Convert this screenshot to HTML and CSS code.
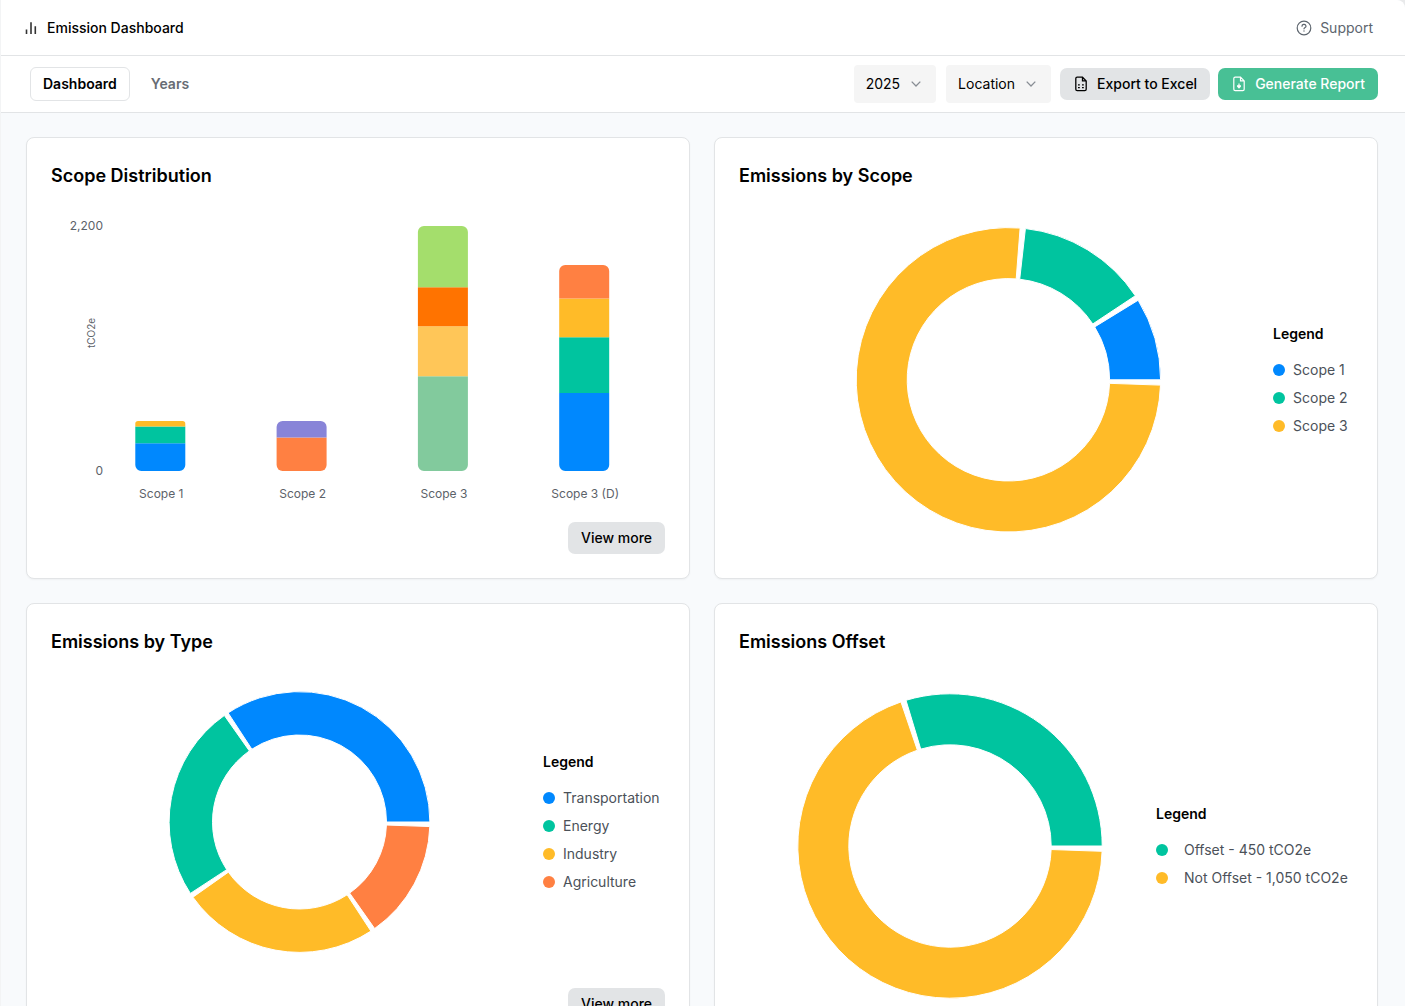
FILE: index.html
```
<!DOCTYPE html>
<html lang="en">

<head>
    <meta charset="UTF-8">
    <meta name="viewport" content="width=device-width, initial-scale=1.0">
    <title>Emission Dashboard</title>
    <link rel="stylesheet" href="styles.css">
</head>

<body>
    <header class="topbar">
        <div class="brand">
            <svg width="12" height="14" viewBox="0 0 12 14" fill="none" stroke="#333" stroke-width="1.6">
                <path d="M1.5 8.5v4.5M6 1.2v11.8M10.3 5.2v7.8" />
            </svg>
            <span>Emission Dashboard</span>
        </div>
        <a class="support">
            <svg width="16" height="16" viewBox="0 0 16 16" fill="none" stroke="currentColor" stroke-width="1.2" stroke-linecap="round">
                <circle cx="8" cy="8" r="6.8" />
                <path d="M6 6.2a2 1.7 0 1 1 3.1 1.3c-.7.45-1.1.7-1.1 1.3" />
                <path d="M8 11v.1" stroke-width="1.3" />
            </svg>
            <span>Support</span>
        </a>
    </header>

    <nav class="toolbar">
        <div class="tabs">
            <button class="tab active">Dashboard</button>
            <button class="tab">Years</button>
        </div>
        <div class="actions">
            <button class="select">2025
                <svg width="10" height="6" viewBox="0 0 10 6" fill="none" stroke="#888d94" stroke-width="1.3"><path d="M.7.6 5 5 9.3.6" /></svg>
            </button>
            <button class="select">Location
                <svg width="10" height="6" viewBox="0 0 10 6" fill="none" stroke="#888d94" stroke-width="1.3"><path d="M.7.6 5 5 9.3.6" /></svg>
            </button>
            <button class="btn export">
                <svg width="12" height="16" viewBox="0 0 12 16" fill="none" stroke="currentColor" stroke-width="1.3">
                    <path d="M7.5 1.2H2.2A1.4 1.4 0 0 0 .8 2.6v10.6a1.4 1.4 0 0 0 1.4 1.4h7.6a1.4 1.4 0 0 0 1.4-1.4V4.9zM7.5 1.2v3.7h3.7" />
                    <path d="M3 8.8h1.8M7 8.8h1.8M3 11.6h1.8M7 11.6h1.8" stroke-width="1.2" />
                </svg>
                Export to Excel
            </button>
            <button class="btn report">
                <svg width="12" height="16" viewBox="0 0 12 16" fill="none" stroke="currentColor" stroke-width="1.2">
                    <path d="M7.5 1.2H2.2A1.4 1.4 0 0 0 .8 2.6v10.6a1.4 1.4 0 0 0 1.4 1.4h7.6a1.4 1.4 0 0 0 1.4-1.4V4.9zM7.5 1.2v3.7h3.7" />
                    <path d="M6 7.4v4.4M4 9.9h4M4.4 10.2 6 11.8l1.6-1.6" />
                </svg>
                Generate Report
            </button>
        </div>
    </nav>

    <main class="grid">
        <section class="card">
            <h2>Scope Distribution</h2>
            <svg id="scope-bars" class="bars" width="614" height="332"></svg>
            <button class="btn more">View more</button>
        </section>

        <section class="card">
            <h2>Emissions by Scope</h2>
            <div class="chart-row">
                <svg id="by-scope" class="donut" height="380"></svg>
                <div class="legend scope-legend">
                    <h3>Legend</h3>
                    <ul>
                        <li><i class="dot blue"></i>Scope 1</li>
                        <li><i class="dot green"></i>Scope 2</li>
                        <li><i class="dot yellow"></i>Scope 3</li>
                    </ul>
                </div>
            </div>
        </section>

        <section class="card">
            <h2>Emissions by Type</h2>
            <div class="chart-row type-row">
                <svg id="by-type" class="donut" height="332"></svg>
                <div class="legend type-legend">
                    <h3>Legend</h3>
                    <ul>
                        <li><i class="dot blue"></i>Transportation</li>
                        <li><i class="dot green"></i>Energy</li>
                        <li><i class="dot yellow"></i>Industry</li>
                        <li><i class="dot orange"></i>Agriculture</li>
                    </ul>
                </div>
            </div>
            <button class="btn more">View more</button>
        </section>

        <section class="card">
            <h2>Emissions Offset</h2>
            <div class="chart-row">
                <svg id="offset" class="donut" height="380"></svg>
                <div class="legend offset-legend">
                    <h3>Legend</h3>
                    <ul>
                        <li><i class="dot green"></i>Offset - 450 tCO2e</li>
                        <li><i class="dot yellow"></i>Not Offset - 1,050 tCO2e</li>
                    </ul>
                </div>
            </div>
        </section>
    </main>

    <script src="charts.js"></script>
</body>

</html>
```
FILE: styles.css
```
* {
    box-sizing: border-box;
}

html {
    background-color: #e9eaeb;
}

body {
    margin: 0;
    height: 1006px;
    overflow: hidden;
    font-family: Inter, "Liberation Sans", sans-serif;
    font-size: 14px;
    line-height: 20px;
    color: #000;
    background-color: #f8fafc;
    border-left: 1px solid #f3f4f5;
}

button {
    font: inherit;
    color: inherit;
    border: none;
    background: none;
    cursor: pointer;
}

.topbar {
    display: flex;
    justify-content: space-between;
    align-items: center;
    height: 56px;
    padding: 0 32px 0 24px;
    background-color: #fff;
    border-bottom: 1px solid #e2e4e6;
}

.brand {
    display: flex;
    align-items: center;
    gap: 10px;
    font-weight: 500;
}

.support {
    display: flex;
    align-items: center;
    gap: 8px;
    color: #5d656e;
}

.toolbar {
    display: flex;
    justify-content: space-between;
    align-items: center;
    height: 57px;
    padding: 0 27px 0 29px;
    background-color: #fff;
    border-bottom: 1px solid #e2e4e6;
}

.tabs {
    display: flex;
    gap: 8px;
}

.tab {
    height: 34px;
    padding: 0 12px;
    border: 1px solid transparent;
    border-radius: 6px;
    font-weight: 600;
    color: #676c74;
}

.tab.active {
    color: #000;
    border-color: #e2e4e6;
}

.actions {
    display: flex;
    align-items: center;
}

.select {
    display: flex;
    align-items: center;
    gap: 11px;
    height: 38px;
    padding: 0 15px 0 12px;
    margin-right: 10px;
    border-radius: 4px;
    background-color: #f5f5f5;
}

.select + .btn {
    margin-left: -1px;
}

.btn {
    display: flex;
    align-items: center;
    height: 32px;
    padding: 0 13px;
    border-radius: 7px;
    font-weight: 500;
    background-color: #e2e4e6;
}

.btn svg {
    margin: 0 10px 0 2px;
}

.report {
    margin-left: 8px;
    color: #fff;
    background-color: #48c095;
}

.grid {
    display: grid;
    grid-template-columns: 664px 664px;
    grid-auto-rows: 442px;
    gap: 24px;
    padding: 24px 0 0 25px;
}

.card {
    padding: 24px;
    background-color: #fff;
    border: 1px solid #e2e4e6;
    border-radius: 8px;
    box-shadow: 0 1px 2px rgba(0, 0, 0, 0.04);
}

.card h2 {
    margin: 0;
    font-size: 18px;
    line-height: 28px;
    font-weight: 600;
}

.bars,
.donut {
    display: block;
}

.donut {
    flex: 1;
    min-width: 0;
}

.bars text {
    font-size: 12px;
    fill: #5c6269;
}

.bars .unit {
    font-size: 10px;
}

.more {
    margin-left: auto;
}

.chart-row {
    display: flex;
    align-items: center;
    height: 380px;
}

.type-row {
    height: 332px;
}

.legend h3 {
    margin: 0 0 16px;
    font-size: 14px;
    line-height: 20px;
    font-weight: 600;
}

.legend ul {
    display: flex;
    flex-direction: column;
    gap: 8px;
    margin: 0;
    padding: 0;
    list-style: none;
}

.legend li {
    display: flex;
    align-items: center;
    gap: 8px;
    color: #4b5159;
    white-space: nowrap;
}

.scope-legend {
    width: 80px;
}

.type-legend {
    width: 122px;
}

.offset-legend {
    width: 197px;
}

.offset-legend li {
    gap: 16px;
}

.dot {
    flex: none;
    width: 12px;
    height: 12px;
    border-radius: 50%;
}

.blue {
    background-color: #0088fe;
}

.green {
    background-color: #00c49f;
}

.yellow {
    background-color: #ffbb28;
}

.orange {
    background-color: #ff8042;
}

body,
.topbar {
    border-top-right-radius: 8px;
}
```
FILE: charts.js
```
const SVG_NS = 'http://www.w3.org/2000/svg';

function add(svg, tag, attrs, text) {
    const el = document.createElementNS(SVG_NS, tag);
    for (const key in attrs) el.setAttribute(key, attrs[key]);
    if (text) el.textContent = text;
    svg.appendChild(el);
}

// angles go counter-clockwise, starting at 3 o'clock
function drawDonut(id, cx, cy, outer, inner, slices) {
    const svg = document.getElementById(id);
    const padding = 2;
    const total = slices.reduce((sum, s) => sum + s[0], 0);
    const sweep = 360 - padding * slices.length;
    const point = (r, deg) => {
        const rad = deg * Math.PI / 180;
        return (cx + r * Math.cos(rad)) + ' ' + (cy - r * Math.sin(rad));
    };

    let start = 0;
    slices.forEach(([value, color]) => {
        const angle = value / total * sweep;
        const end = start + angle;
        const large = angle > 180 ? 1 : 0;
        const d = `M${point(outer, start)} A${outer} ${outer} 0 ${large} 0 ${point(outer, end)}` +
            ` L${point(inner, end)} A${inner} ${inner} 0 ${large} 1 ${point(inner, start)}Z`;
        add(svg, 'path', { d, fill: color, stroke: '#fff' });
        start = end + padding;
    });
}

function drawBars() {
    const svg = document.getElementById('scope-bars');
    const top = 36, height = 245, width = 50, max = 2200;
    const bars = [
        ['Scope 1', [[250, '#0088fe'], [150, '#00c49f'], [50, '#ffbb28']]],
        ['Scope 2', [[300, '#ff8042'], [150, '#8884d8']]],
        ['Scope 3', [[850, '#82ca9d'], [450, '#ffc658'], [350, '#ff7300'], [550, '#a4de6c']]],
        ['Scope 3 (D)', [[700, '#0088fe'], [500, '#00c49f'], [350, '#ffbb28'], [300, '#ff8042']]]
    ];

    add(svg, 'text', { x: 52, y: top + 4, 'text-anchor': 'end' }, '2,200');
    add(svg, 'text', { x: 52, y: top + height + 4, 'text-anchor': 'end' }, '0');
    add(svg, 'text', { class: 'unit', transform: 'translate(44 143) rotate(-90)', 'text-anchor': 'middle' }, 'tCO2e');

    bars.forEach(([label, parts], i) => {
        const x = 84.3 + i * 141.3;
        let y = top + height;
        parts.forEach(([value, color], j) => {
            const h = value / max * height;
            const b = j === 0 ? 6 : 0;
            const t = j === parts.length - 1 ? Math.min(6, h / 2) : 0;
            y -= h;
            const d = `M${x} ${y + t} a${t} ${t} 0 0 1 ${t} ${-t} h${width - 2 * t} a${t} ${t} 0 0 1 ${t} ${t}` +
                ` v${h - t - b} a${b} ${b} 0 0 1 ${-b} ${b} h${2 * b - width} a${b} ${b} 0 0 1 ${-b} ${-b}Z`;
            add(svg, 'path', { d, fill: color });
        });
        add(svg, 'text', { x: x + 26, y: 308, 'text-anchor': 'middle' }, label);
    });
}

drawBars();
drawDonut('by-scope', 269.4, 189.8, 152.2, 101.2, [[450, '#0088fe'], [715, '#00c49f'], [3890, '#ffbb28']]);
drawDonut('by-type', 248.5, 166, 130.4, 87, [[35, '#0088fe'], [25, '#00c49f'], [25, '#ffbb28'], [15, '#ff8042']]);
drawDonut('offset', 211, 190, 152.2, 101.2, [[450, '#00c49f'], [1050, '#ffbb28']]);
```
